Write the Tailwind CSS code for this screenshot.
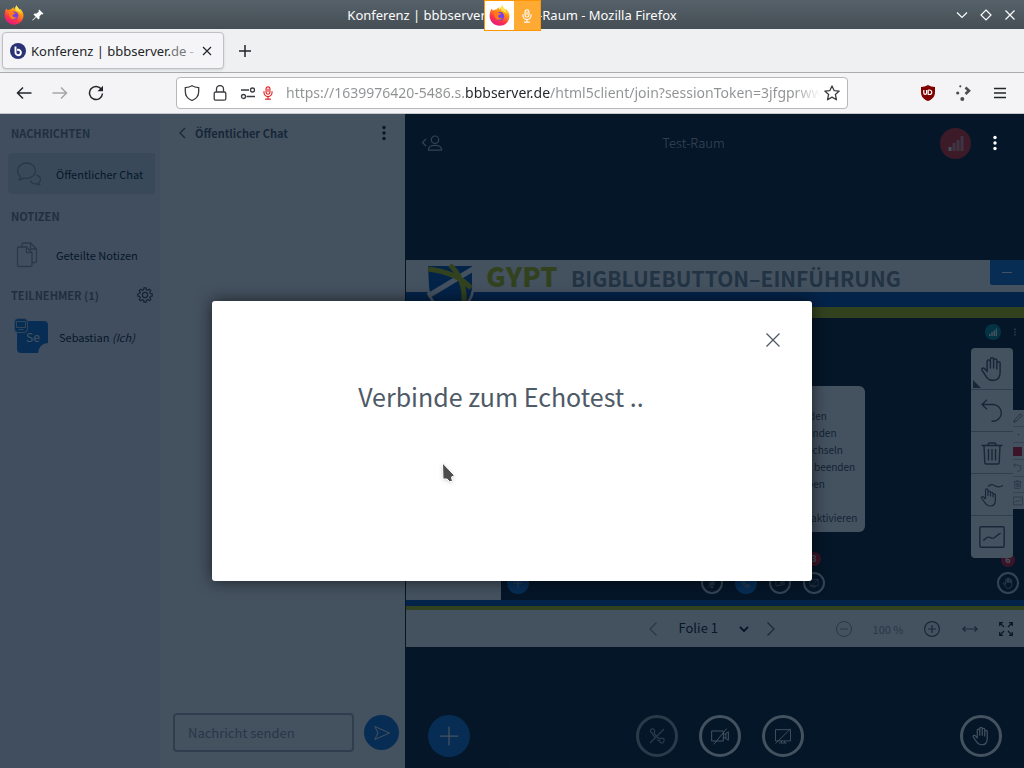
<!DOCTYPE html>
<html lang="de">
<head>
  <meta charset="UTF-8">
  <meta name="viewport" content="width=device-width, initial-scale=1.0">
  <title>Konferenz | bbbserver.de - Test-Raum</title>
  <script src="https://cdn.jsdelivr.net/npm/@tailwindcss/browser@4"></script>
</head>
<body class="h-screen flex flex-col overflow-hidden font-['Noto_Sans',sans-serif] text-[#232629]">

  <!-- shared icons -->
  <svg class="absolute w-0 h-0">
    <defs>
      <linearGradient id="fox" x1="0.8" y1="0" x2="0.3" y2="1">
        <stop offset="0" stop-color="#fff44f"/>
        <stop offset="0.35" stop-color="#ff980e"/>
        <stop offset="0.7" stop-color="#ff3647"/>
        <stop offset="1" stop-color="#e31587"/>
      </linearGradient>
    </defs>
    <symbol id="firefox" viewBox="0 0 20 20">
      <path d="M2.2 3.5 L4 5.2 C5 4.4 6 4.1 7.2 4.2 C8 3 9 2.4 10 2.2 C9.6 3 9.7 3.6 10.2 4.2 C11 3.2 11.3 1.8 12.6 .2 C13 2.3 14.6 3 15.8 4.5 L16.5 4 C18.6 6.2 19.8 8.6 19.4 11.6 C18.8 16.4 15 19.7 10.2 19.7 C5 19.7 .8 15.8 .6 10.6 C.5 8 1.4 5.5 2.2 3.5Z" fill="url(#fox)"/>
      <circle cx="10.2" cy="10.6" r="4.2" fill="#7542e5"/>
      <path d="M4.2 7.2 C6 6 8.4 6.3 9.8 7.6 L11.6 8 C11 9.4 9.4 9.2 8.6 10 C8.6 12.4 10.8 13 12.8 12 C11.6 14.6 7.6 15 6 12.4 C5 10.8 5.4 9.2 4.2 7.2Z" fill="#ff7a1a"/>
      <path d="M12.6 .2 C13 2.6 16.8 4.6 16.9 9 C16.4 7.6 15 6.4 13.2 6 C11 5.2 11 2.6 12.6 .2Z" fill="#ffe54a"/>
    </symbol>
    <symbol id="mic" viewBox="0 0 12 16">
      <g fill="none" stroke="currentColor" stroke-width="1.3" stroke-linecap="round">
        <rect x="3.8" y="1" width="4.4" height="8.4" rx="2.2"/>
        <path d="M1.4 6.5v1a4.6 4.6 0 0 0 9.2 0v-1M6 12.2v2.8M3.2 15h5.6M6 3.4v3"/>
      </g>
    </symbol>
    <symbol id="micoff" viewBox="0 0 16 16">
      <path d="M6 3a2 2 0 0 1 4 0v4a2 2 0 0 1-4 0ZM3.500 7a4.500 4.500 0 0 0 9 0M8 11.500V15M5.500 15h5M2 15 14 1" fill="none" stroke="currentColor" stroke-width="1.2"/>
    </symbol>
    <symbol id="hand" viewBox="0 0 24 24">
      <path d="M7.5 14V5.2a1.5 1.5 0 0 1 3 0V11 3.2a1.5 1.5 0 0 1 3 0V11 4.2a1.5 1.5 0 0 1 3 0V12 6.8a1.5 1.5 0 0 1 3 0V15c0 5-2 7.5-6.5 7.5-4 0-5.3-1.6-7-4.5L2.7 13c-.6-1.2.8-2.3 2-1.5 1 .7 1.8 1.6 2.8 2.8" fill="none" stroke="currentColor" stroke-width="1.4" stroke-linecap="round" stroke-linejoin="round"/>
    </symbol>
    <symbol id="undo" viewBox="0 0 24 24">
      <path d="M7 .8 2 5.500l5 4.700M2 5.500h11a8.300 8.300 0 0 1 0 16.700h-1.500" fill="none" stroke="currentColor" stroke-width="1.4"/>
    </symbol>
    <symbol id="trash" viewBox="0 0 24 24">
      <path d="M1.500 4.500h21M8 4.500c0-2 1-2.500 2-2.500h4c1 0 2 .5 2 2.500M4 4.500l.8 17q0 1.500 1.500 1.500h11.400q1.500 0 1.500-1.500l.8-17M8.500 8v11.500M12 8v11.500M15.500 8v11.500" fill="none" stroke="currentColor" stroke-width="1.4"/>
    </symbol>
    <symbol id="board" viewBox="0 0 24 24">
      <g fill="none" stroke="currentColor" stroke-width="1.3">
        <rect x=".8" y="2.500" width="22.400" height="19" rx="1"/>
        <path d="M4 15.500c3-4 5-4 7.500-2.500s4-2.500 8.500-4.500"/>
      </g>
    </symbol>
    <symbol id="camoff" viewBox="0 0 24 24">
      <path d="M2 6h14v12H2zM16 10.500l3-1.500V15l-3-1.500M19 9l3-2v10l-3-2M4.500 22 20 3" fill="none" stroke="currentColor" stroke-width="1.2"/>
    </symbol>
    <symbol id="screenoff" viewBox="0 0 24 24">
      <path d="M2 3.500h20v15H2zM2 22 22 2.500M7 21.300h10M10 18.500v2.500M14 18.500v2.500" fill="none" stroke="currentColor" stroke-width="1.2"/>
    </symbol>
    <symbol id="plus" viewBox="0 0 24 24">
      <path d="M12 1v22M1 12h22" stroke="currentColor" stroke-width="1.5"/>
    </symbol>
    <symbol id="dots" viewBox="0 0 4 16">
      <g fill="currentColor"><circle cx="2" cy="2.500" r="1.700"/><circle cx="2" cy="8" r="1.700"/><circle cx="2" cy="13.500" r="1.700"/></g>
    </symbol>
  </svg>

  <!-- window title bar -->
  <header class="relative h-[29px] shrink-0 flex items-center justify-between px-1 bg-linear-to-b from-[#56616a] to-[#454e54] text-[#fcfcfc]">
    <div class="flex items-center gap-2">
      <svg class="w-5 h-5"><use href="#firefox"/></svg>
      <svg class="w-3 h-3" viewBox="0 0 12 12" fill="currentColor"><path d="M7.200.5 11.500 4.800 10.500 5.500 9.800 5 7.500 7.300V9.500L6.500 10.500 4.200 8.200.8 11.600.2 11 3.700 7.700 1.500 5.500 2.500 4.500H4.700L7 2.200 6.500 1.500Z"/></svg>
    </div>
    <h1 class="absolute inset-x-0 text-center text-[13px] leading-4">Konferenz | bbbserver.de - Test-Raum - Mozilla Firefox</h1>
    <div class="relative flex items-center gap-3 pr-1">
      <button aria-label="Minimieren"><svg class="w-3 h-3" viewBox="0 0 12 12" fill="none" stroke="currentColor" stroke-width="1.200"><path d="M1 3.500 6 8.500 11 3.500"/></svg></button>
      <button aria-label="Maximieren"><svg class="w-3 h-3" viewBox="0 0 12 12" fill="none" stroke="currentColor" stroke-width="1.200"><path d="M6 1 11 6 6 11 1 6Z"/></svg></button>
      <button aria-label="Schließen"><svg class="w-3 h-3" viewBox="0 0 12 12" fill="none" stroke="currentColor" stroke-width="1.200"><path d="M1.500 1.500 10.500 10.500M10.500 1.500 1.500 10.500"/></svg></button>
    </div>
    <!-- sharing indicator -->
    <div class="absolute z-10 top-0 left-1/2 -ml-7 w-[57px] h-[31px] flex border border-[#ff9500] bg-white">
      <div class="flex-1 flex items-center justify-center"><svg class="w-[21px] h-[21px]"><use href="#firefox"/></svg></div>
      <div class="w-[26px] flex items-center justify-center bg-[#ffaa33]"><svg class="w-3 h-[14px]"><use href="#mic"/></svg></div>
    </div>
  </header>

  <!-- tab strip -->
  <nav class="h-11 shrink-0 flex items-center bg-[#eff0f1] border-b border-[#aaabad]">
    <div class="ml-[2px] w-[222px] h-[37px] flex items-center pl-[7px] pr-2 rounded-[4px] bg-[#f5f5f7] border border-[#c0c0c4] shadow-sm">
      <svg class="w-4 h-4 shrink-0" viewBox="0 0 16 16">
        <circle cx="8" cy="8" r="8" fill="#283274"/>
        <path d="M5.500 3.500v6a2.700 2.700 0 1 0 2.700-2.700H7" fill="none" stroke="#fff" stroke-width="1.900"/>
      </svg>
      <a href="#" class="ml-[5px] w-[167px] whitespace-nowrap text-[13px] leading-5">Konferenz | bbbserver.<span class="text-[#77797c]">de</span> <span class="text-[#b5b6b8]">-</span></a>
      <button class="ml-1" aria-label="Tab schließen"><svg class="w-[10px] h-[10px]" viewBox="0 0 10 10" stroke="currentColor" stroke-width="1.200"><path d="M1 1 9 9M9 1 1 9"/></svg></button>
    </div>
    <button class="ml-[15px]" aria-label="Neuer Tab"><svg class="w-3 h-3" viewBox="0 0 12 12" stroke="currentColor" stroke-width="1.500"><path d="M6 0V12M0 6H12"/></svg></button>
  </nav>

  <!-- navigation bar -->
  <div class="h-[41px] shrink-0 flex items-center bg-[#f4f4f6] border-b border-[#c5c8ca]">
    <div class="w-[176px] pl-4 flex items-center gap-5">
      <button aria-label="Zurück"><svg class="w-4 h-4" viewBox="0 0 16 16" fill="none" stroke="currentColor" stroke-width="1.500"><path d="M15.500 8H1.500M7 2.500 1.500 8 7 13.500"/></svg></button>
      <button class="text-[#a5a6a8]" aria-label="Vor"><svg class="w-4 h-4" viewBox="0 0 16 16" fill="none" stroke="currentColor" stroke-width="1.500"><path d="M.5 8H14.500M9 2.500 14.500 8 9 13.500"/></svg></button>
      <button aria-label="Neu laden"><svg class="w-4 h-4" viewBox="0 0 16 16" fill="none" stroke="currentColor" stroke-width="1.500"><path d="M13.500 4.500A6.500 6.500 0 1 0 14.500 8.500"/><path d="M15 .8V6.200H9.500Z" fill="currentColor" stroke="none"/></svg></button>
    </div>
    <div class="flex-1 h-8 flex items-center rounded-[4px] border border-[#b5b7b9] bg-white px-[7px] text-[#3a3d40]">
      <svg class="w-4 h-4" viewBox="0 0 16 16" fill="none" stroke="currentColor" stroke-width="1.300"><path d="M8 .8C6 2 3.500 2.500 1.300 2.700V6.500C1.300 11 4 14 8 15.500 12 14 14.700 11 14.700 6.500V2.700C12.500 2.500 10 2 8 .8Z"/></svg>
      <svg class="ml-3 w-4 h-4" viewBox="0 0 16 16" fill="none" stroke="currentColor" stroke-width="1.300"><rect x="2.200" y="7" width="11.600" height="8.200" rx="1.500"/><path d="M4.500 7V4a3.500 3.500 0 0 1 7 0V7"/></svg>
      <svg class="ml-3 w-4 h-4" viewBox="0 0 16 16" fill="none" stroke="currentColor" stroke-width="1.300"><path d="M1 5H9M6.500 11.500H15"/><circle cx="12.500" cy="5" r="2"/><circle cx="3.500" cy="11.500" r="2"/></svg>
      <svg class="ml-[6px] w-3 h-[14px] text-[#e02020]"><use href="#mic"/></svg>
      <input type="text" aria-label="Adresse" value="https://1639976420-5486.s.bbbserver.de/html5client/join?sessionToken=3jfgprwwxy" class="ml-3 flex-1 min-w-0 text-[14px] leading-5 outline-none text-transparent bg-clip-text bg-[linear-gradient(90deg,#8f9193_0,#8f9193_179px,#232629_179px,#232629_264px,#8f9193_264px,#8f9193_508px,transparent_534px)]">
      <button aria-label="Lesezeichen"><svg class="w-4 h-4" viewBox="0 0 16 16" fill="none" stroke="currentColor" stroke-width="1.300" stroke-linejoin="round"><path d="M8 .9 10.100 5.600 15.200 6.100 11.400 9.600 12.500 14.800 8 12.100 3.500 14.800 4.600 9.600.8 6.100 5.900 5.600Z"/></svg></button>
    </div>
    <div class="w-[176px] pr-4 flex items-center justify-end gap-5">
      <button aria-label="uBlock Origin"><svg class="w-4 h-4" viewBox="0 0 16 16"><path d="M8 0C6 1.300 3.500 1.800 1 2V7C1 12 4 14.500 8 16 12 14.500 15 12 15 7V2C12.500 1.800 10 1.300 8 0Z" fill="#800000"/><path d="M3.800 5V8a1.300 1.300 0 0 0 2.800 0V5M8.200 5V9.500H9.500a2.200 2.200 0 0 0 0-4.500H8.200" fill="none" stroke="#fff" stroke-width="1.200"/></svg></button>
      <button aria-label="Plasma Integration"><svg class="w-4 h-4" viewBox="0 0 16 16" fill="#4d4d4d"><circle cx="4.300" cy="1.300" r="1.100"/><circle cx="1.700" cy="8" r="1.600"/><circle cx="6.300" cy="14" r="2"/><path d="M9.500 2.500 13 5.700 9.500 9" fill="none" stroke="#4d4d4d" stroke-width="2.600"/></svg></button>
      <button aria-label="Menü"><svg class="w-4 h-4" viewBox="0 0 16 16" stroke="currentColor" stroke-width="1.500"><path d="M2 3.500H14M2 8H14M2 12.500H14"/></svg></button>
    </div>
  </div>

  <!-- BigBlueButton client -->
  <div class="relative flex-1 min-h-0 flex bg-[#06172a] font-['Noto_Sans_CJK_SC',sans-serif]">

    <!-- user list -->
    <aside class="w-40 shrink-0 pt-[9px] bg-[#f3f3ff]">
      <h2 class="h-5 pl-[11px] text-[11px] leading-5 font-bold text-[#6b7884]">NACHRICHTEN</h2>
      <a href="#" class="mt-[10px] ml-2 mr-[5px] h-[41px] flex items-center rounded-l-[4px] bg-[#d4dfe8] text-[11px] leading-5 text-[#06172a]">
        <svg class="ml-2 w-[26px] h-[26px] text-[#8b9aa8]" viewBox="0 0 26 26" fill="none" stroke="currentColor" stroke-width="1.300"><path d="M4.500 15.500C2.500 14 1.500 12 1.500 9.800 1.500 5.500 5.500 2 10.500 2s9 3.500 9 7.800-4 7.700-9 7.700c-1 0-1.800-.1-2.700-.4C6.500 18 5 18.500 3.200 18.500c.8-.8 1.300-1.800 1.300-3Z"/><path d="M20.500 14.500c2.500.3 4 2 4 4 0 1.200-.6 2.300-1.600 3 0 .9.300 1.600.8 2.200-1.200 0-2.200-.4-3-1-3 .6-6-.8-6.200-3.300"/></svg>
        <span class="ml-[14px]">Öffentlicher Chat</span>
      </a>
      <h2 class="mt-3 h-5 pl-[11px] text-[11px] leading-5 font-bold text-[#6b7884]">NOTIZEN</h2>
      <a href="#" class="mt-[9px] ml-2 mr-[5px] h-10 flex items-center text-[11px] leading-5 text-[#06172a]">
        <svg class="ml-2 w-[26px] h-[26px] text-[#8b9aa8]" viewBox="0 0 26 26" fill="none" stroke="currentColor" stroke-width="1.300"><path d="M2.500 5H10.500L16 10.500V23q0 1.500-1.500 1.500H3Q1.500 24.500 1.500 23V6.500Q1.500 5 2.500 5ZM10.500 5V10.500H16M6 5V2.500Q6 1 7.500 1H14.500L20.500 7V19Q20.500 20.500 19 20.500H16M14.500 1V7H20.500"/></svg>
        <span class="ml-[14px]">Geteilte Notizen</span>
      </a>
      <div class="mt-[10px] h-5 pl-[11px] pr-[7px] flex items-center justify-between">
        <h2 class="text-[11px] leading-5 font-bold text-[#6b7884]">TEILNEHMER (1)</h2>
        <button class="text-[#384552]" aria-label="Benutzer verwalten"><svg class="w-4 h-4" viewBox="0 0 16 16" fill="none" stroke="currentColor" stroke-width="1.200"><path d="M6.600 2.700 7 .8H9L9.400 2.700 10.800 3.300 12.400 2.200 13.800 3.600 12.700 5.200 13.300 6.600 15.200 7V9L13.300 9.400 12.700 10.800 13.800 12.400 12.400 13.800 10.800 12.700 9.400 13.300 9 15.200H7L6.600 13.300 5.200 12.700 3.600 13.800 2.200 12.400 3.300 10.800 2.700 9.400.8 9V7L2.700 6.600 3.300 5.200 2.200 3.600 3.600 2.200 5.200 3.300Z"/><circle cx="8" cy="8" r="2.600"/></svg></button>
      </div>
      <div class="mt-3 pl-[17px] h-10 flex items-center text-[11px] leading-5 text-[#06172a]">
        <div class="relative w-8 h-8 flex items-center justify-center text-[12px] text-white">
          <svg class="absolute inset-0 w-8 h-8" viewBox="0 0 32 32"><path d="M4 0H27Q31 0 31 4V22A10 10 0 0 0 21 32H4Q0 32 0 28V4Q0 0 4 0Z" fill="#0f70d7"/></svg>
          <span class="relative">Se</span>
          <svg class="absolute -top-[3px] -left-[3px] w-[14px] h-[15px]" viewBox="0 0 14 15"><rect x=".5" y=".5" width="13" height="14" rx="3.500" fill="#0f70d7" stroke="#bcd0e6"/><path d="M2.500 3.500H11.500V9.500H2.500ZM4.500 11.500H9.500" fill="none" stroke="#bcd0e6"/></svg>
        </div>
        <span class="ml-[10px]">Sebastian <i>(Ich)</i></span>
      </div>
    </aside>

    <!-- public chat -->
    <section class="w-[245px] shrink-0 flex flex-col justify-between pt-[9px] pb-4 bg-white">
      <div class="h-5 pl-[18px] pr-[19px] flex items-center text-[#4e5a66]">
        <button class="flex items-center gap-2 text-[11px] leading-5 font-bold">
          <svg class="mr-[1px] w-2 h-3" viewBox="0 0 8 12" fill="none" stroke="currentColor" stroke-width="1.300"><path d="M7 1 2 6 7 11"/></svg>Öffentlicher Chat
        </button>
        <button class="ml-auto text-[#06172a]" aria-label="Chat-Optionen"><svg class="w-1 h-4"><use href="#dots"/></svg></button>
      </div>
      <form class="pl-[13px] pr-[6px] flex items-center gap-[10px]">
        <input type="text" aria-label="Nachricht senden" placeholder="Nachricht senden" class="flex-1 min-w-0 h-[39px] px-[13px] rounded-[4px] border-2 border-[#a7b3bd] text-[13px] placeholder:text-[#8b9aa8]">
        <button type="button" class="w-[35px] h-[35px] flex items-center justify-center rounded-full bg-[#0f70d7] text-white" aria-label="Senden"><svg class="w-4 h-4" viewBox="0 0 16 16" fill="none" stroke="currentColor"><path d="M.8 1.500 15.500 8 .8 14.500 4 8Z"/></svg></button>
      </form>
    </section>

    <main class="flex-1 min-w-0 flex flex-col">
      <div class="h-[58px] pl-4 pr-[27px] flex items-center">
        <button class="text-[#b8c2cc]" aria-label="Teilnehmerliste"><svg class="w-[22px] h-4" viewBox="0 0 22 16" fill="none" stroke="currentColor" stroke-width="1.200"><path d="M5 4 1.500 7.500 5 11"/><circle cx="14" cy="4.700" r="3.700"/><path d="M7.500 15.200V14c0-2.200 3-3.700 6.500-3.700s6.500 1.500 6.500 3.700v1.200Z"/></svg></button>
        <h1 class="flex-1 pl-1 text-center text-[13px] leading-5 font-light text-[#c3ccd5]">Test-Raum</h1>
        <button class="mr-[22px] w-[31px] h-[31px] flex items-center justify-center rounded-full bg-[#df2721]" aria-label="Verbindungsstatus"><svg class="w-4 h-4" viewBox="0 0 16 16"><path d="M.5 12H3.500V16H.5Z" fill="#fff"/><path d="M4.500 8H7.500V16H4.500ZM8.500 5H11.500V16H8.500ZM12.500 1H15.500V16H12.500Z" fill="#e58b91"/></svg></button>
        <button class="relative z-20 text-white" aria-label="Optionen"><svg class="w-1 h-4"><use href="#dots"/></svg></button>
      </div>

      <!-- presentation -->
      <div class="flex-1 min-h-0 ml-[1px] pb-14 flex flex-col justify-end">
        <div class="relative">
          <div class="h-8 pl-20 flex items-baseline bg-white whitespace-nowrap font-bold">
            <span class="w-[85px] text-[27px] leading-8 font-black text-[#b9c400]">GYPT</span>
            <span class="text-[21px] leading-8 text-[#7a8891]">BIGBLUEBUTTON–EINFÜHRUNG</span>
          </div>
          <div class="h-[15px] bg-[#0048a6]"></div>
          <div class="h-[11px] bg-[#b9c400]"></div>
          <svg class="absolute top-1 left-5 w-[50px] h-[52px]" viewBox="0 0 50 52">
            <path d="M1 0H48V25Q48 42 25 52 2 42 1 25Z" fill="#fff"/>
            <path d="M2 2H46V22Q46 40 25 49 4 40 3 22Z" fill="#0048a6"/>
            <path d="M2 32 47 5" stroke="#fff" stroke-width="5"/>
            <path d="M2 5Q30 8 45 24M24 1Q42 18 37 45" fill="none" stroke="#b9c400" stroke-width="5"/>
          </svg>
          <div class="h-[282px] flex">
            <div class="w-[95px] bg-white"></div>
            <div class="relative flex-1 flex flex-col bg-[#06172a]">
              <div class="h-7 pr-[7px] flex items-center justify-end text-white">
                <span class="mr-3 w-4 h-4 flex items-center justify-center rounded-full bg-[#008a90]"><svg class="w-2 h-2" viewBox="0 0 16 16"><path d="M0 12H3V16H0ZM4.500 8H7.500V16H4.500ZM9 5H12V16H9ZM13.300 1H16V16H13.300Z" fill="#fff"/></svg></span>
                <svg class="w-1 h-2 text-[#b8c2cc]"><use href="#dots"/></svg>
              </div>
              <ul class="mt-10 ml-auto mr-[159px] w-[180px] h-[146px] pt-[21px] rounded-[6px] bg-white text-[10px] leading-[17px] text-[#3c4854]">
                <li class="pl-[124px]">den</li>
                <li class="pl-[122px]">enden</li>
                <li class="pl-[122px]">echseln</li>
                <li class="pl-[129px]">beenden</li>
                <li class="pl-[122px]">ben</li>
                <li class="mt-[17px] pl-[126px]">aktivieren</li>
              </ul>
              <div class="mt-auto pb-[6px] pl-[6px] pr-[5px] flex justify-between text-[#c3ccd5]">
                <span class="w-[22px] h-[22px] flex items-center justify-center rounded-full bg-[#0f70d7]"><svg class="w-[10px] h-[10px]"><use href="#plus"/></svg></span>
                <div class="flex gap-3">
                  <span class="w-[22px] h-[22px] flex items-center justify-center rounded-full border-2"><svg class="w-[10px] h-[10px]"><use href="#micoff"/></svg></span>
                  <span class="w-[22px] h-[22px] flex items-center justify-center rounded-full bg-[#0f70d7]"><svg class="w-[10px] h-[10px]" viewBox="0 0 12 12" fill="none" stroke="currentColor"><path d="M1 2.500Q2.500 0 4 3.500L3.500 5Q5 8 7.500 8.500L9 8Q12 9.500 9.500 11 5 12 2.500 7.500 1 5 1 2.500Z"/></svg></span>
                  <span class="w-[22px] h-[22px] flex items-center justify-center rounded-full border-2"><svg class="w-[10px] h-[10px]"><use href="#camoff"/></svg></span>
                  <span class="relative w-[22px] h-[22px] flex items-center justify-center rounded-full border-2"><svg class="w-[10px] h-[10px]"><use href="#screenoff"/></svg>
                    <b class="absolute -top-[22px] left-[2px] w-[14px] h-[14px] rounded-full bg-[#df0f21] text-center text-[9px] leading-[14px] text-white">3</b></span>
                </div>
                <span class="relative w-[22px] h-[22px] flex items-center justify-center rounded-full border-2"><svg class="w-3 h-3"><use href="#hand"/></svg>
                  <b class="absolute -top-[21px] left-[2px] w-[14px] h-[14px] rounded-full bg-[#df0f21] text-center text-[9px] leading-[14px] text-white">6</b></span>
              </div>
              <!-- toolbar inside the slide image -->
              <div class="absolute top-[92px] right-0 w-[11px] h-[99px] flex flex-col divide-y divide-[#c3ccd5] bg-white text-[#4e5a66]">
                <div class="flex-1 flex items-center"><svg class="w-[10px] h-[10px]" viewBox="0 0 12 12" fill="none" stroke="currentColor"><path d="M1 11 2 8 9 1 11 3 4 10Z"/></svg></div>
                <div class="flex-1 flex items-center justify-center"><i class="w-[1px] h-[1px] bg-[#4e5a66]"></i></div>
                <div class="flex-1 flex items-center"><i class="w-[9px] h-[9px] bg-[#df0f21]"></i></div>
                <div class="flex-1 flex items-center"><svg class="w-[9px] h-[9px]"><use href="#undo"/></svg></div>
                <div class="flex-1 flex items-center"><svg class="w-[9px] h-[9px]"><use href="#trash"/></svg></div>
                <div class="flex-1 flex items-center"><svg class="w-[10px] h-[10px]"><use href="#board"/></svg></div>
              </div>
            </div>
          </div>
          <div class="h-[6px] bg-[#0048a6]"></div>
          <div class="h-1 bg-[#b9c400]"></div>

          <button class="absolute top-0 right-0 w-[34px] h-[25px] flex items-center justify-center rounded-bl-[2px] bg-[#0f70d7]" aria-label="Präsentation verbergen"><i class="w-[10px] h-[1px] bg-white"></i></button>

          <!-- whiteboard tools -->
          <div class="absolute top-[88px] right-[11px] w-[42px] flex flex-col divide-y divide-[#a7b3bd] rounded-[4px] bg-white text-[#4e5a66]">
            <button class="relative h-[42px] flex items-center justify-center" aria-label="Verschieben"><svg class="w-[26px] h-[26px]"><use href="#hand"/></svg><svg class="absolute bottom-[1px] left-[2px] w-2 h-2" viewBox="0 0 8 8"><path d="M0 0 8 8H0Z" fill="currentColor"/></svg></button>
            <button class="h-[42px] flex items-center justify-center" aria-label="Rückgängig"><svg class="w-6 h-6"><use href="#undo"/></svg></button>
            <button class="h-[42px] flex items-center justify-center" aria-label="Löschen"><svg class="w-6 h-6"><use href="#trash"/></svg></button>
            <button class="h-[42px] flex items-center justify-center" aria-label="Mehrbenutzermodus"><svg class="w-6 h-6" viewBox="0 0 24 24" fill="none" stroke="currentColor" stroke-width="1.200" stroke-linejoin="round"><path d="M8 3.500c3-3 5-2 7.500-.5s4 1.500 7.500-.5M5.500 16V7a1.200 1.200 0 0 1 2.400 0v5.500V9.500a1.200 1.200 0 0 1 2.600 0V13v-2.500a1.200 1.200 0 0 1 2.500 0V14v-2a1.200 1.200 0 0 1 2.400 0v5c0 4-1.500 6-5 6s-4.500-1.500-6-4L1.500 15c-.5-1.200 1-2 2-1L5.500 16"/></svg></button>
            <button class="h-[42px] flex items-center justify-center" aria-label="Whiteboard"><svg class="w-[26px] h-[26px]"><use href="#board"/></svg></button>
          </div>
        </div>

        <div class="h-[37px] grid grid-cols-[1fr_auto_1fr] items-center pr-[11px] bg-white text-[#06172a]">
          <div></div>
          <div class="flex items-center pl-1">
            <button class="text-[#8b9aa8]" aria-label="Vorherige Folie"><svg class="w-2 h-[14px]" viewBox="0 0 8 14" fill="none" stroke="currentColor" stroke-width="1.200"><path d="M7.500.5 1 7 7.500 13.500"/></svg></button>
            <div class="relative ml-[22px] mr-[18px] flex items-center">
              <select aria-label="Folie auswählen" class="appearance-none w-[70px] h-5 pb-[2px] text-[13px] leading-4">
                <option>Folie 1</option>
              </select>
              <svg class="absolute right-0 w-[10px] h-2 pointer-events-none" viewBox="0 0 10 8" fill="none" stroke="currentColor" stroke-width="1.800"><path d="M1 2 5 6 9 2"/></svg>
            </div>
            <button class="text-[#4e5a66]" aria-label="Nächste Folie"><svg class="w-2 h-[14px]" viewBox="0 0 8 14" fill="none" stroke="currentColor" stroke-width="1.200"><path d="M.5.500 7 7 .5 13.500"/></svg></button>
          </div>
          <div class="flex items-center justify-end text-[#4e5a66]">
            <button class="text-[#8b9aa8]" aria-label="Verkleinern"><svg class="w-4 h-4" viewBox="0 0 16 16" fill="none" stroke="currentColor"><circle cx="8" cy="8" r="7.500"/><path d="M4 8H12"/></svg></button>
            <span class="w-[72px] text-center text-[11px] leading-5 text-[#8b9aa8]">100 %</span>
            <button aria-label="Vergrößern"><svg class="w-4 h-4" viewBox="0 0 16 16" fill="none" stroke="currentColor" stroke-width="1.200"><circle cx="8" cy="8" r="7.400"/><path d="M4 8H12M8 4V12"/></svg></button>
            <button class="ml-[22px]" aria-label="An Breite anpassen"><svg class="w-4 h-4" viewBox="0 0 16 16" fill="none" stroke="currentColor" stroke-width="1.200"><path d="M.8 8H15.200M3.500 5.500 .8 8 3.500 10.500M12.500 5.500 15.200 8 12.500 10.500"/></svg></button>
            <button class="ml-[21px] text-[#06172a]" aria-label="Vollbild"><svg class="w-[14px] h-[14px]" viewBox="0 0 14 14" fill="none" stroke="currentColor" stroke-width="1.200"><path d="M.7 4V.7H4M.7.7 5 5M10 .7H13.300V4M13.300.7 9 5M.7 10V13.300H4M.7 13.300 5 9M10 13.300H13.300V10M13.300 13.300 9 9"/></svg></button>
          </div>
        </div>
      </div>

      <!-- actions -->
      <div class="h-[65px] pl-[23px] pr-[22px] flex items-center justify-between text-white">
        <div class="w-[52px]">
          <button class="w-[42px] h-[42px] flex items-center justify-center rounded-full bg-[#0f70d7]" aria-label="Aktionen"><svg class="w-5 h-5"><use href="#plus"/></svg></button>
        </div>
        <div class="flex gap-[21px]">
          <button class="w-[42px] h-[42px] flex items-center justify-center rounded-full border-3 border-white/60 text-white/60" aria-label="Audio starten"><svg class="w-4 h-4" viewBox="0 0 16 16" fill="none" stroke="currentColor" stroke-width="1.200"><path d="M15 1 1 15M6.300 9.700C4.500 7.800 3.800 6.800 3 5 1.500 4.300 1 3 1.600 2 2.200.8 4 .5 5 1.600S5.800 4 5 5C5.700 6.700 8.800 10 10.800 10.800 12.500 9.800 14 10 14.800 11.200S14.700 14.500 13.500 14.900 11 14.500 10.700 12.900C9.500 12.500 8.800 12 8.200 11.500"/></svg></button>
          <button class="w-[42px] h-[42px] flex items-center justify-center rounded-full border-3" aria-label="Webcam freigeben"><svg class="w-5 h-5"><use href="#camoff"/></svg></button>
          <button class="w-[42px] h-[42px] flex items-center justify-center rounded-full border-3" aria-label="Bildschirm freigeben"><svg class="w-[18px] h-[18px]"><use href="#screenoff"/></svg></button>
        </div>
        <button class="w-[42px] h-[42px] flex items-center justify-center rounded-full border-3" aria-label="Hand heben"><svg class="w-5 h-5"><use href="#hand"/></svg></button>
      </div>
    </main>

    <!-- audio dialog -->
    <div class="absolute inset-0 z-10 flex items-center justify-center bg-[#06172a]/75">
      <div role="dialog" aria-label="Verbinde zum Echotest" class="relative w-[600px] h-[280px] flex flex-col rounded-[3px] bg-white shadow-[0_0_16px_rgba(0,0,0,0.6)] text-[#4e5a66]">
        <div class="h-[77px] pr-[31px] flex items-center justify-end">
          <button aria-label="Schließen"><svg class="w-4 h-4" viewBox="0 0 16 16" stroke="currentColor" stroke-width="1.300"><path d="M1.500 1.500 14.500 14.500M14.500 1.500 1.500 14.500"/></svg></button>
        </div>
        <p class="text-center text-[25px] leading-9">Verbinde zum Echotest <span class="inline-block w-9 text-left">..</span></p>
        <svg class="absolute top-[161px] left-[230px] w-[14px] h-6 drop-shadow" viewBox="0 0 14 24"><path d="M.5 1 12.500 13.500 9.500 15 10.500 19.500 7.500 19.500 5 17H1Z" fill="#4d4d4d" stroke="#fff"/></svg>
      </div>
    </div>
  </div>
</body>
</html>
